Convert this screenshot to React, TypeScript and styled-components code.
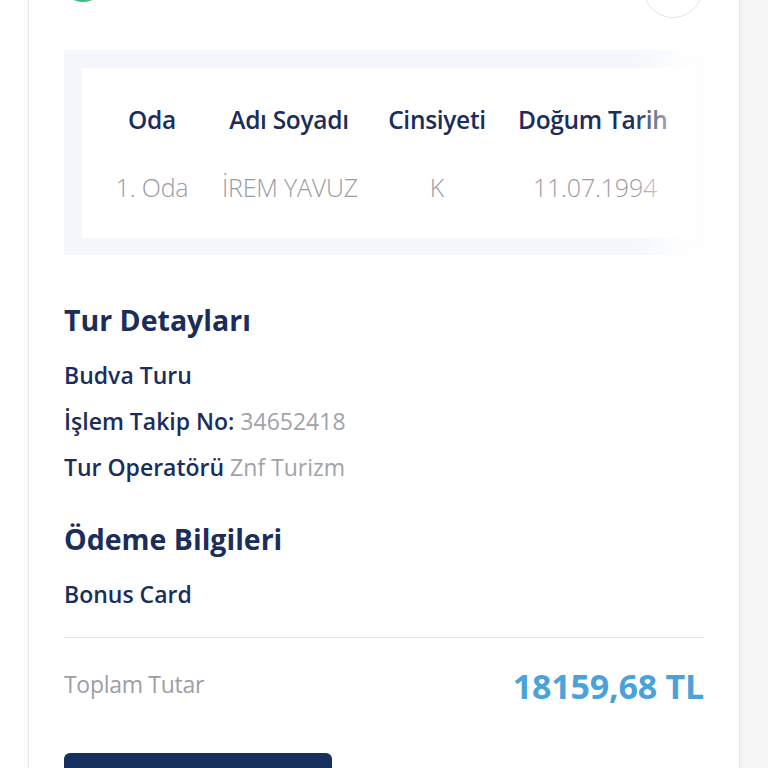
import React from "react";
import styled, { createGlobalStyle } from "styled-components";

const GlobalStyle = createGlobalStyle`
  html, body {
    margin: 0;
    padding: 0;
    background: #f6f6f7;
    font-family: "Open Sans", "Noto Sans", sans-serif;
    overflow: hidden;
  }
`;

const Page = styled.div`
  width: 768px;
  height: 768px;
  overflow: hidden;
  background: linear-gradient(90deg, #ffffff 0 28px, #f6f6f7 28px);
`;

const Card = styled.div`
  margin: -44px 0 0 28px;
  width: 712px;
  box-sizing: border-box;
  background: #ffffff;
  border-left: 1px solid #e6e6e8;
  border-right: 1px solid #e6e6e8;
  box-shadow: 0 0 8px rgba(0, 0, 0, 0.04);
  padding: 0 35px 40px 35px;
`;

const TopRow = styled.div`
  display: flex;
  justify-content: space-between;
  align-items: flex-start;
  height: 62px;
`;

const StatusDot = styled.div`
  width: 46px;
  height: 46px;
  margin-left: -4px;
  border-radius: 50%;
  background: #3dbb78;
`;

const CloseCircle = styled.div`
  width: 60px;
  height: 60px;
  margin-top: 2px;
  margin-right: 1px;
  border-radius: 50%;
  border: 1.5px solid #e4e4e6;
  box-sizing: border-box;
`;

const TableFrame = styled.div`
  position: relative;
  margin-top: 32px;
  height: 205px;
  box-sizing: border-box;
  padding: 18px 14px 17px 18px;
  background: #f4f7fc;
`;

const TableSurface = styled.div`
  height: 100%;
  background: #ffffff;
  padding-right: 22px;
`;

const Scroller = styled.div`
  height: 100%;
  overflow: hidden;
`;

const Fade = styled.div`
  position: absolute;
  top: 0;
  right: 0;
  width: 70px;
  height: 100%;
  background: linear-gradient(90deg, rgba(255, 255, 255, 0), rgba(255, 255, 255, 0.85) 70%);
  pointer-events: none;
`;

const Table = styled.table<{ $w: number }>`
  width: ${({ $w }) => $w}px;
  border-collapse: collapse;
  margin-top: 22px;
  table-layout: fixed;
`;

const HeadCell = styled.th<{ $w: number }>`
  width: ${({ $w }) => $w}px;
  height: 58px;
  padding: 0;
  text-align: center;
  white-space: nowrap;
  font-size: 24.5px;
  font-weight: 600;
  letter-spacing: -0.3px;
  color: #1b2d5b;
`;

const Cell = styled.td`
  height: 78px;
  padding: 0;
  text-align: center;
  white-space: nowrap;
  font-size: 25px;
  font-weight: 300;
  letter-spacing: -0.2px;
  color: #9b9ba3;
`;

const SectionTitle = styled.h2<{ $top: number }>`
  margin: ${({ $top }) => $top}px 0 0 0;
  font-size: 28.5px;
  line-height: 36px;
  font-weight: 700;
  color: #1b2d5b;
`;

const InfoList = styled.div`
  display: flex;
  flex-direction: column;
  gap: 16px;
  margin-top: 22px;
`;

const InfoLine = styled.div`
  font-size: 23px;
  line-height: 30px;
  font-weight: 600;
  color: #1b2d5b;
`;

const InfoValue = styled.span`
  font-weight: 400;
  color: #a2a2a8;
`;

const Divider = styled.hr`
  margin: 28px 0 0 0;
  border: none;
  border-top: 1px solid #e3e3e6;
`;

const TotalRow = styled.div`
  display: flex;
  justify-content: space-between;
  align-items: center;
  margin-top: 26px;
  height: 40px;
`;

const TotalLabel = styled.span`
  font-size: 23px;
  font-weight: 400;
  letter-spacing: -0.3px;
  color: #9d9da5;
`;

const TotalAmount = styled.span`
  font-size: 34px;
  font-weight: 700;
  letter-spacing: -0.2px;
  color: #4aa2da;
  margin-top: 3px;
`;

const PayButton = styled.button`
  display: block;
  margin-top: 49px;
  width: 268px;
  height: 60px;
  border: none;
  border-radius: 6px;
  background: #15305f;
`;

const columns = [
  { label: "Oda", width: 140, value: "1. Oda" },
  { label: "Adı Soyadı", width: 134, value: "İREM YAVUZ" },
  { label: "Cinsiyeti", width: 162, value: "K" },
  { label: "Doğum Tarihi", width: 154, value: "11.07.1994" },
];

const tableWidth = columns.reduce((sum, c) => sum + c.width, 0);

export default function App() {
  return (
    <Page>
      <GlobalStyle />
      <Card>
        <TopRow>
          <StatusDot />
          <CloseCircle />
        </TopRow>

        <TableFrame>
          <TableSurface>
            <Scroller>
              <Table $w={tableWidth}>
                <thead>
                  <tr>
                    {columns.map((c) => (
                      <HeadCell key={c.label} $w={c.width}>
                        {c.label}
                      </HeadCell>
                    ))}
                  </tr>
                </thead>
                <tbody>
                  <tr>
                    {columns.map((c) => (
                      <Cell key={c.label}>{c.value}</Cell>
                    ))}
                  </tr>
                </tbody>
              </Table>
            </Scroller>
          </TableSurface>
          <Fade />
        </TableFrame>

        <SectionTitle $top={47}>Tur Detayları</SectionTitle>
        <InfoList>
          <InfoLine>Budva Turu</InfoLine>
          <InfoLine>
            İşlem Takip No: <InfoValue>34652418</InfoValue>
          </InfoLine>
          <InfoLine>
            Tur Operatörü <InfoValue>Znf Turizm</InfoValue>
          </InfoLine>
        </InfoList>

        <SectionTitle $top={39}>Ödeme Bilgileri</SectionTitle>
        <InfoList>
          <InfoLine>Bonus Card</InfoLine>
        </InfoList>

        <Divider />

        <TotalRow>
          <TotalLabel>Toplam Tutar</TotalLabel>
          <TotalAmount>18159,68 TL</TotalAmount>
        </TotalRow>

        <PayButton />
      </Card>
    </Page>
  );
}
